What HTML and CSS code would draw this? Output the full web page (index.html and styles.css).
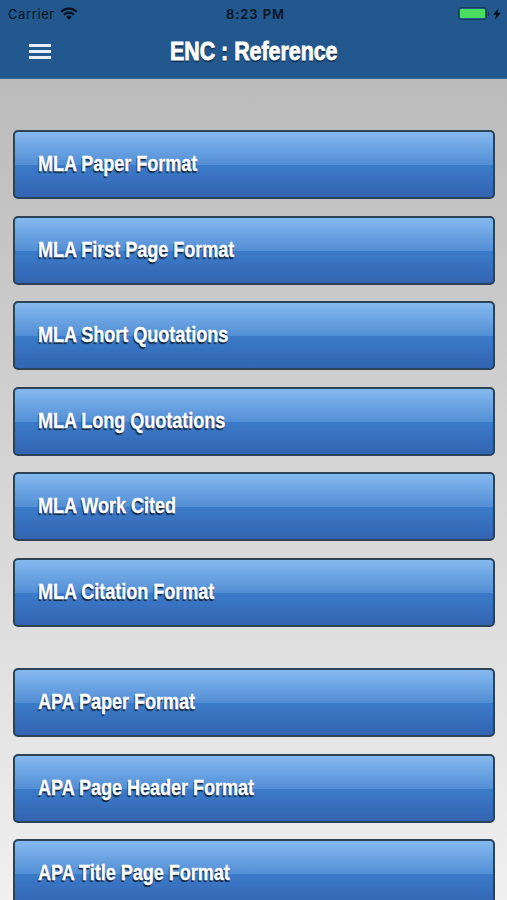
FILE: index.html
```html
<!DOCTYPE html>
<html lang="en">
<head>
    <meta charset="utf-8">
    <title>ENC : Reference</title>
    <link rel="stylesheet" href="styles.css">
</head>
<body>
    <header class="header">
        <div class="status-bar">
            <div class="carrier">
                <span>Carrier</span>
                <svg class="wifi" viewBox="0 0 18 13" width="18" height="13">
                    <path d="M1.2 4.8a11.2 11.2 0 0 1 15.6 0M4 7.7a7.2 7.2 0 0 1 10 0" fill="none" stroke="#07131f" stroke-width="2.2"/>
                    <path d="M6.2 9.9a4.1 4.1 0 0 1 5.6 0L9 12.8z" fill="#07131f"/>
                </svg>
            </div>
            <div class="time">8:23 PM</div>
            <div class="power">
                <div class="battery"></div>
                <svg class="bolt" viewBox="0 0 8 12" width="8" height="12">
                    <path d="M5.8 0L0 6.8h3.2L1.8 12 8 4.8H4.6z" fill="#07131f"/>
                </svg>
            </div>
        </div>
        <div class="nav-bar">
            <div class="menu">
                <i></i>
                <i></i>
                <i></i>
            </div>
            <h1 class="title"><span>ENC : Reference</span></h1>
        </div>
    </header>

    <main class="content">
        <div class="section">
            <a class="button"><span>MLA Paper Format</span></a>
            <a class="button"><span>MLA First Page Format</span></a>
            <a class="button"><span>MLA Short Quotations</span></a>
            <a class="button"><span>MLA Long Quotations</span></a>
            <a class="button"><span>MLA Work Cited</span></a>
            <a class="button"><span>MLA Citation Format</span></a>
        </div>
        <div class="section">
            <a class="button"><span>APA Paper Format</span></a>
            <a class="button"><span>APA Page Header Format</span></a>
            <a class="button"><span>APA Title Page Format</span></a>
        </div>
    </main>
</body>
</html>
```

FILE: styles.css
```css
* {
    box-sizing: border-box;
}
body {
    margin: 0;
    height: 900px;
    overflow: hidden;
    font-family: "Liberation Sans", Arial, sans-serif;
    background: linear-gradient(#bbb 80px, #f0f0f0 900px);
}
.header {
    height: 79px;
    background-color: #22588e;
    border-bottom: 1px solid #366b98;
}
.status-bar {
    display: grid;
    grid-template-columns: 1fr auto 1fr;
    align-items: center;
    height: 27px;
    padding: 0 6px 0 8px;
    color: #07131f;
    font-family: Inter, "Liberation Sans", sans-serif;
    font-size: 13px;
}
.carrier {
    display: flex;
    align-items: center;
    gap: 5px;
    letter-spacing: 0.6px;
}
.time {
    padding-left: 2px;
    font-weight: 600;
    letter-spacing: 0.9px;
}
.power {
    display: flex;
    justify-content: flex-end;
    align-items: center;
    gap: 6px;
}
.battery {
    position: relative;
    width: 29px;
    height: 13px;
    border: 1px solid #153c57;
    border-radius: 3px;
    background: #4bdc62 content-box;
    padding: 1px;
}
.battery::after {
    content: "";
    position: absolute;
    top: 4px;
    right: -3px;
    width: 1px;
    height: 4px;
    background-color: #153c57;
}
.nav-bar {
    display: grid;
    grid-template-columns: 1fr auto 1fr;
    align-items: center;
    height: 49px;
    padding: 0 29px;
}
.menu {
    display: flex;
    flex-direction: column;
    gap: 3px;
    width: 22px;
}
.menu i {
    height: 3px;
    background-color: #e6f1fc;
}
.title {
    width: 168px;
    margin: 0 0 2px;
    font-size: 25px;
    line-height: 30px;
    color: #fff;
    white-space: nowrap;
}
.title span {
    display: inline-block;
    transform: scaleX(0.855);
    transform-origin: left;
    -webkit-text-stroke: 0.8px #fff;
    text-shadow: 0 2px 1px #102b47;
}
.content {
    display: flex;
    flex-direction: column;
    gap: 41px;
    padding: 51px 12px 0 13px;
}
.section {
    display: flex;
    flex-direction: column;
    gap: 16.6px;
}
.button {
    display: flex;
    align-items: center;
    height: 69px;
    padding: 0 23px 1px;
    border: 2px solid #2a4358;
    border-radius: 5px;
    background: linear-gradient(#85b9f0 0%, #538fd5 50%, #3c7bc9 51%, #3264b1 100%);
    color: #fff;
    font-size: 22.5px;
    font-weight: bold;
    white-space: nowrap;
}
.button span {
    transform: scaleX(0.8);
    transform-origin: left;
    -webkit-text-stroke: 0.3px #fff;
    text-shadow: -1px 2px 1px #14283f;
}
```
